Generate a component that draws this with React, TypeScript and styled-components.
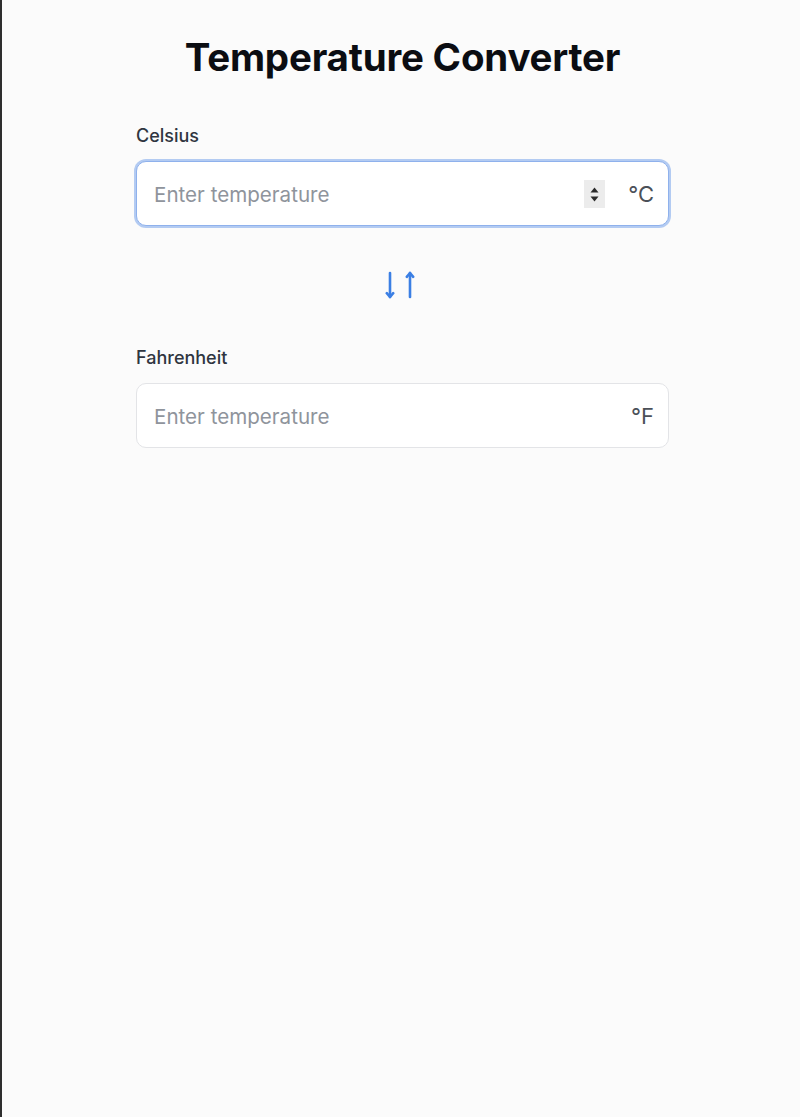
import React from "react";
import styled, { createGlobalStyle } from "styled-components";

const GlobalStyle = createGlobalStyle`
  html, body {
    margin: 0;
    padding: 0;
    background: #fbfbfb;
  }
  body {
    font-family: Inter, "Noto Sans", "Liberation Sans", sans-serif;
    -webkit-font-smoothing: antialiased;
  }
  * { box-sizing: border-box; }
`;

const Page = styled.div`
  min-height: 1117px;
  border-left: 2px solid #2e2e2e;
  padding: 33px 0 0 3px;
`;

const Container = styled.main`
  width: 533px;
  margin: 0 auto;
  display: flex;
  flex-direction: column;
`;

const Title = styled.h1`
  margin: 0 0 44px;
  text-align: center;
  font-size: 38.5px;
  line-height: 48px;
  font-weight: 700;
  color: #0b0d12;
  letter-spacing: -0.2px;
`;

const Field = styled.div`
  display: flex;
  flex-direction: column;
  gap: 14px;
`;

const Label = styled.label`
  font-size: 18px;
  line-height: 22px;
  font-weight: 500;
  color: #2f3540;
`;

const InputBox = styled.div<{ $focused?: boolean }>`
  display: flex;
  align-items: center;
  height: 65px;
  padding: 1px 14px 0 17px;
  background: #ffffff;
  border-radius: 10px;
  border: 1px solid ${(p) => (p.$focused ? "#8fb1ec" : "#e3e4e7")};
  box-shadow: ${(p) => (p.$focused ? "0 0 0 2px #b3cbf2" : "none")};
`;

const Input = styled.input`
  flex: 1;
  min-width: 0;
  border: none;
  outline: none;
  background: transparent;
  font-family: inherit;
  font-size: 20.6px;
  color: #111827;
  padding: 0;
  &::placeholder {
    color: #8f949c;
  }
  &::-webkit-outer-spin-button,
  &::-webkit-inner-spin-button {
    -webkit-appearance: none;
    margin: 0;
  }
`;

const Spinner = styled.div`
  width: 21px;
  height: 28px;
  background: #ececec;
  display: flex;
  flex-direction: column;
  align-items: center;
  justify-content: center;
  gap: 3px;
  margin-right: 23px;
`;

const Unit = styled.span`
  font-size: 22px;
  color: #4b5058;
  font-weight: 400;
`;

const SwapRow = styled.div`
  display: flex;
  justify-content: center;
  padding: 44px 0 47px;
`;

const SwapButton = styled.button`
  border: none;
  background: transparent;
  padding: 0;
  margin-right: 6px;
  cursor: pointer;
  display: flex;
  color: #3b7fe4;
`;

const SpinArrows = () => (
  <>
    <svg width="9" height="6" viewBox="0 0 9 6">
      <path d="M4.5 0.5 L8.5 5.5 L0.5 5.5 Z" fill="#2a2a2a" />
    </svg>
    <svg width="9" height="6" viewBox="0 0 9 6">
      <path d="M0.5 0.5 L8.5 0.5 L4.5 5.5 Z" fill="#2a2a2a" />
    </svg>
  </>
);

const SwapIcon = () => (
  <svg width="30" height="30" viewBox="0 0 30 30" fill="none" stroke="currentColor" strokeWidth="2.6" strokeLinecap="round" strokeLinejoin="round">
    <path d="M5 3 V27" />
    <path d="M1.8 23.2 L5 27 L8.2 23.2" />
    <path d="M25 27 V3" />
    <path d="M21.8 6.8 L25 3 L28.2 6.8" />
  </svg>
);

export default function App() {
  return (
    <>
      <GlobalStyle />
      <Page>
        <Container>
          <Title>Temperature Converter</Title>
          <Field>
            <Label htmlFor="celsius">Celsius</Label>
            <InputBox $focused>
              <Input id="celsius" type="number" placeholder="Enter temperature" />
              <Spinner>
                <SpinArrows />
              </Spinner>
              <Unit>°C</Unit>
            </InputBox>
          </Field>
          <SwapRow>
            <SwapButton aria-label="Swap">
              <SwapIcon />
            </SwapButton>
          </SwapRow>
          <Field>
            <Label htmlFor="fahrenheit">Fahrenheit</Label>
            <InputBox>
              <Input id="fahrenheit" type="number" placeholder="Enter temperature" />
              <Unit>°F</Unit>
            </InputBox>
          </Field>
        </Container>
      </Page>
    </>
  );
}
